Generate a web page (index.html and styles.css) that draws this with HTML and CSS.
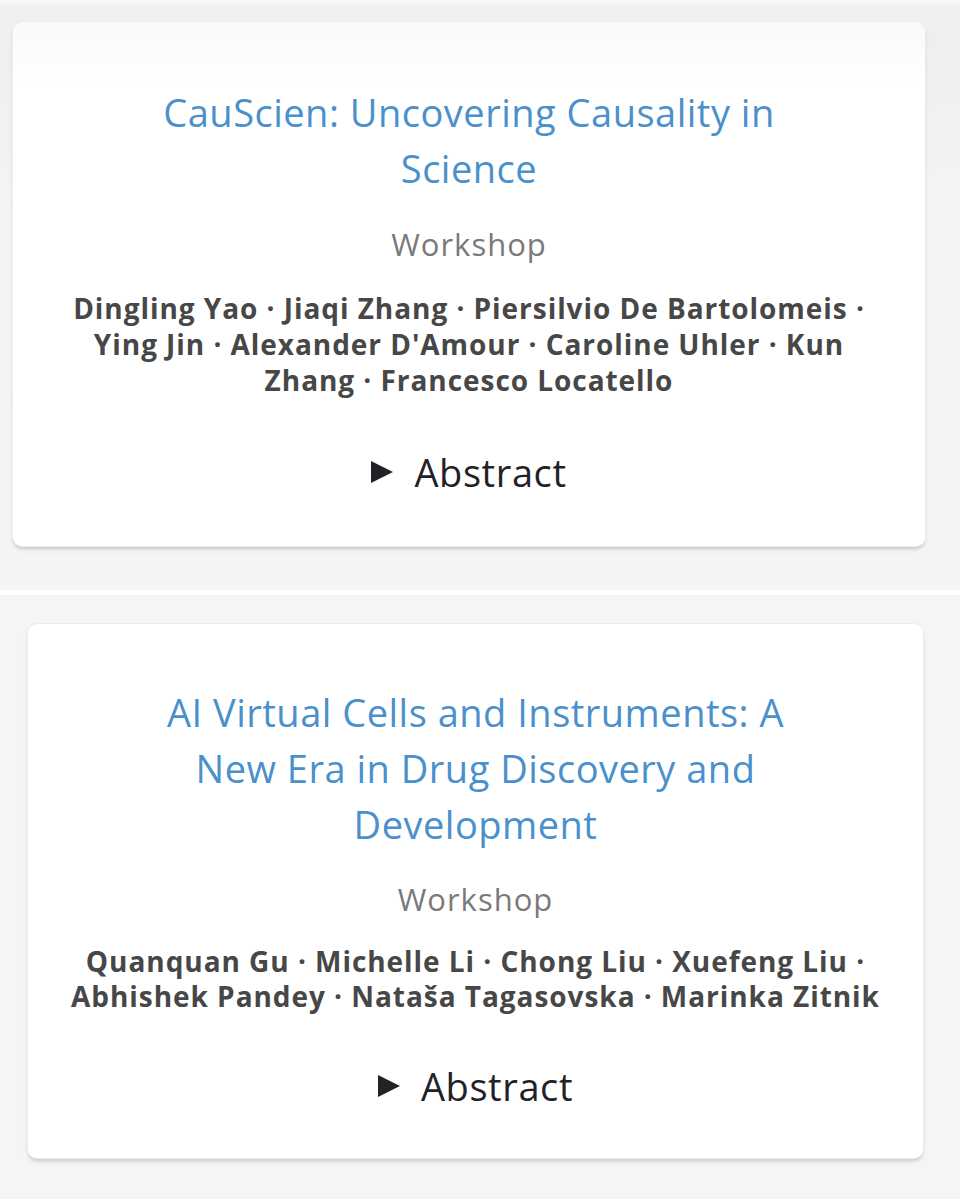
FILE: index.html
```html
<!DOCTYPE html>
<html>
<head>
<meta charset="utf-8">
<link rel="stylesheet" href="styles.css">
</head>
<body>
<div class="page">
  <section class="slot slot-first">
    <article class="card card-a">
      <h2 class="title">CauScien: Uncovering Causality in Science</h2>
      <div class="kind">Workshop</div>
      <p class="authors">Dingling Yao · Jiaqi Zhang · Piersilvio De Bartolomeis · Ying Jin · Alexander D'Amour · Caroline Uhler · Kun Zhang · Francesco Locatello</p>
      <div class="abstract"><span class="tri"></span><span>Abstract</span></div>
    </article>
  </section>
  <div class="sep"></div>
  <section class="slot slot-second">
    <article class="card card-b">
      <h2 class="title">AI Virtual Cells and Instruments: A New Era in Drug Discovery and Development</h2>
      <div class="kind">Workshop</div>
      <p class="authors">Quanquan Gu · Michelle Li · Chong Liu · Xuefeng Liu · Abhishek Pandey · Nataša Tagasovska · Marinka Zitnik</p>
      <div class="abstract"><span class="tri"></span><span>Abstract</span></div>
    </article>
  </section>
</div>
</body>
</html>
```
FILE: styles.css
```css
html, body {
  margin: 0;
  padding: 0;
}
body {
  background: #f5f5f5;
  font-family: "Open Sans", "Noto Sans", sans-serif;
  width: 960px;
  height: 1199px;
  overflow: hidden;
}
.page {
  display: flex;
  flex-direction: column;
}
.slot-first {
  background: linear-gradient(#fbfbfb 0, #f0f0f0 6px, #efefef 40px, #f4f4f4 200px, #f5f5f5 100%);
  padding: 22px 35px 44px 13px;
}
.sep {
  height: 5px;
  background: #ffffff;
}
.slot-second {
  padding: 29px 37px 0 28px;
}
.card {
  background: #ffffff;
  border-radius: 9px;
  box-shadow: 0 0 0 1px #ececec, 0 3px 3px rgba(0, 0, 0, 0.12), 0 4px 6px rgba(0, 0, 0, 0.06);
  display: flex;
  flex-direction: column;
  align-items: center;
  text-align: center;
  padding: 62px 40px 52px;
}
.card-a {
  background: linear-gradient(#f9f9f9, #ffffff 60px);
}
.card-b {
  padding: 60px 24px 50px;
}
.title {
  margin: 0;
  font-weight: 400;
  font-size: 38px;
  letter-spacing: 0.5px;
  line-height: 56px;
  color: #4a90cc;
  max-width: 680px;
}
.kind {
  margin-top: 28px;
  font-size: 31px;
  letter-spacing: 1px;
  line-height: 40px;
  color: #7a7a7a;
}
.authors {
  margin: 26px 0 0;
  font-weight: 700;
  font-size: 28px;
  letter-spacing: 0.95px;
  line-height: 36px;
  color: #474747;
}
.card-b .kind { margin-top: 27px; }
.card-b .authors { margin-top: 25px; line-height: 35px; }
.abstract {
  margin-top: 52px;
  display: flex;
  align-items: center;
  gap: 21px;
  font-size: 38px;
  letter-spacing: 0.6px;
  line-height: 44px;
  color: #222226;
}
.card-b .abstract { margin-top: 50px; }
.tri {
  width: 0;
  height: 0;
  border-top: 11px solid transparent;
  border-bottom: 11px solid transparent;
  border-left: 22px solid #222226;
}
```
